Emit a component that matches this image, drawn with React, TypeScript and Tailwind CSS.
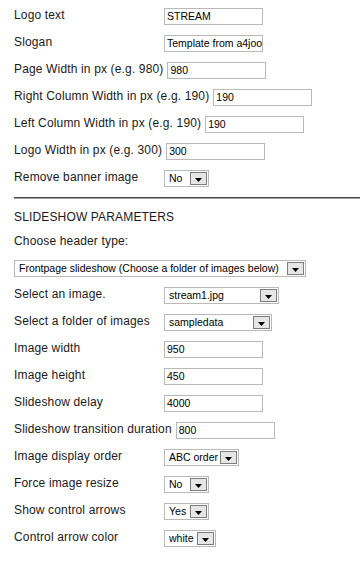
import React from "react";

const font = { fontFamily: '"Liberation Sans", Arial, sans-serif' };

function Arrow() {
  return (
    <span className="mr-[1px] flex h-[13px] w-[17px] shrink-0 items-center justify-center border border-[#7d7d7d] bg-[#e6e6e6] pt-[2px]">
      <svg width="7" height="4" viewBox="0 0 7 4">
        <polygon points="0,0 7,0 3.5,4" fill="#000" />
      </svg>
    </span>
  );
}

function TextBox({ value, w = "w-[99px]" }: { value: string; w?: string }) {
  return (
    <div
      className={`${w} h-[17px] shrink-0 overflow-hidden whitespace-nowrap border border-[#b9b9b9] bg-white pl-[2px] text-[10.5px] leading-[15px] text-black`}
    >
      {value}
    </div>
  );
}

function Select({ value, w }: { value: string; w: string }) {
  return (
    <div
      className={`${w} flex h-[17px] shrink-0 items-center border border-[#b9b9b9] bg-white pl-[4px] text-[10.5px] leading-[15px] text-black`}
    >
      <span className="min-w-0 flex-1 overflow-hidden whitespace-nowrap">{value}</span>
      <Arrow />
    </div>
  );
}

function Row({ label, children }: { label: string; children: React.ReactNode }) {
  return (
    <div className="flex h-[27px] items-start">
      <div className="min-w-[150px] shrink-0 whitespace-nowrap pr-[4px] text-[12px] leading-[15px] tracking-[0.15px] text-[#1a1a1a]">
        {label}
      </div>
      {children}
    </div>
  );
}

export default function App() {
  return (
    <div className="h-[567px] w-[360px] overflow-hidden bg-white pl-[14px] pt-[8px]" style={font}>
      <Row label="Logo text">
        <TextBox value="STREAM" />
      </Row>
      <Row label="Slogan">
        <TextBox value="Template from a4joomla" />
      </Row>
      <Row label="Page Width in px (e.g. 980)">
        <TextBox value="980" />
      </Row>
      <Row label="Right Column Width in px (e.g. 190)">
        <TextBox value="190" />
      </Row>
      <Row label="Left Column Width in px (e.g. 190)">
        <TextBox value="190" />
      </Row>
      <Row label="Logo Width in px (e.g. 300)">
        <TextBox value="300" />
      </Row>
      <Row label="Remove banner image">
        <Select value="No" w="w-[45px]" />
      </Row>
      <div className="h-[1px] bg-[#4a4a4a]" />
      <div className="h-[1px] bg-[#a0a0a0]" />
      <div className="mt-[11px] text-[12px] leading-[15px] tracking-[0.15px] text-[#1a1a1a]">SLIDESHOW PARAMETERS</div>
      <div className="mt-[9px] text-[12px] leading-[15px] tracking-[0.15px] text-[#1a1a1a]">Choose header type:</div>
      <div className="mt-[11px] mb-[10px]">
        <Select value="Frontpage slideshow (Choose a folder of images below)" w="w-[292px]" />
      </div>
      <Row label="Select an image.">
        <Select value="stream1.jpg" w="w-[115px]" />
      </Row>
      <Row label="Select a folder of images">
        <Select value="sampledata" w="w-[108px]" />
      </Row>
      <Row label="Image width">
        <TextBox value="950" />
      </Row>
      <Row label="Image height">
        <TextBox value="450" />
      </Row>
      <Row label="Slideshow delay">
        <TextBox value="4000" />
      </Row>
      <Row label="Slideshow transition duration">
        <TextBox value="800" />
      </Row>
      <Row label="Image display order">
        <Select value="ABC order" w="w-[75px]" />
      </Row>
      <Row label="Force image resize">
        <Select value="No" w="w-[45px]" />
      </Row>
      <Row label="Show control arrows">
        <Select value="Yes" w="w-[45px]" />
      </Row>
      <Row label="Control arrow color">
        <Select value="white" w="w-[52px]" />
      </Row>
    </div>
  );
}
